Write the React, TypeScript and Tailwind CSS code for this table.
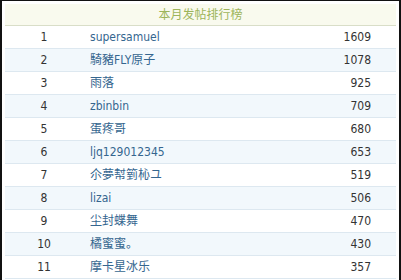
import React from 'react';

const rows = [
  { rank: 1, name: 'supersamuel', count: 1609 },
  { rank: 2, name: '騎豬FLY原子', count: 1078 },
  { rank: 3, name: '雨落', count: 925 },
  { rank: 4, name: 'zbinbin', count: 709 },
  { rank: 5, name: '蛋疼哥', count: 680 },
  { rank: 6, name: 'ljq129012345', count: 653 },
  { rank: 7, name: '尒夢幇箌杺ユ', count: 519 },
  { rank: 8, name: 'lizai', count: 506 },
  { rank: 9, name: '尘封蝶舞', count: 470 },
  { rank: 10, name: '橘蜜蜜。', count: 430 },
  { rank: 11, name: '摩卡星冰乐', count: 357 },
];

export default function App() {
  return (
    <div className="w-[401px] h-[280px] overflow-hidden bg-white">
      <div
        className="h-[300px] border-t border-l-2 border-r-2 border-[#111] p-[3px] text-[12px]"
        style={{ fontFamily: '"DejaVu Sans Condensed", "Noto Sans CJK SC", sans-serif' }}
      >
        <div className="h-[22px] flex items-center justify-center bg-[#f9faee] border-b border-[#d9dec8] text-[#9db55a]">
          本月发帖排行榜
        </div>
        {rows.map((r) => (
          <div
            key={r.rank}
            className={`h-[23px] flex items-center border-b border-[#dde8f0] ${
              r.rank % 2 === 0 ? 'bg-[#f2f8fc]' : 'bg-white'
            }`}
          >
            <span className="w-[78px] text-center text-[#333]">{r.rank}</span>
            <span className="flex-1 pl-[7px] text-[#35668f]">{r.name}</span>
            <span className="pr-[25px] text-[#333]">{r.count}</span>
          </div>
        ))}
      </div>
    </div>
  );
}
